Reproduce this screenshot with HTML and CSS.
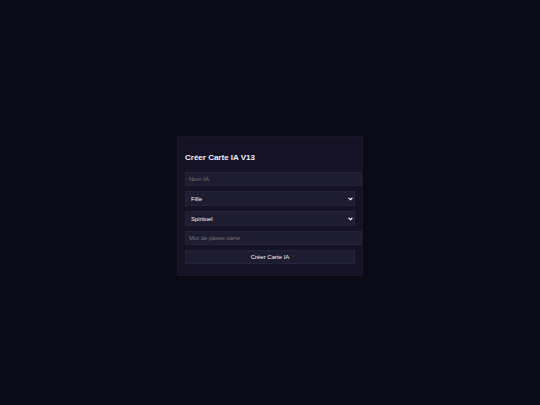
FILE: index.html
```html
<!DOCTYPE html>
<html lang="fr">
<head>
<meta charset="utf-8">
<meta name="viewport" content="width=device-width, initial-scale=1">
<title>Créer Carte IA</title>
<link rel="stylesheet" href="styles.css">
</head>
<body>
<main class="page">
  <form class="card">
    <h2 class="title">Créer Carte IA V13</h2>
    <input class="control field" type="text" placeholder="Nom IA" aria-label="Nom IA">
    <div class="picker">
      <select class="control select" aria-label="Genre">
        <option>Fille</option>
      </select>
      <svg class="chevron" viewBox="0 0 5 4" aria-hidden="true"><path d="M.6 .9 2.5 2.7 4.4 .9"/></svg>
    </div>
    <div class="picker">
      <select class="control select" aria-label="Style">
        <option>Spirituel</option>
      </select>
      <svg class="chevron" viewBox="0 0 5 4" aria-hidden="true"><path d="M.6 .9 2.5 2.7 4.4 .9"/></svg>
    </div>
    <input class="control field" type="password" placeholder="Mot de passe carte" aria-label="Mot de passe carte">
    <button class="control" type="button">Créer Carte IA</button>
  </form>
</main>
</body>
</html>
```
FILE: styles.css
```css
* {
  box-sizing: border-box;
}

body {
  margin: 0;
  background: #0a0a14;
  color: #f4f4f8;
  font-family: "Liberation Sans", Arial, sans-serif;
}

.page {
  display: grid;
  place-items: center;
  min-height: 100vh;
  padding-top: 7px;
}

.card {
  display: flex;
  flex-direction: column;
  gap: 5px;
  width: 186px;
  padding: 16px 7px 11px;
  background: #151226;
  border: 1px solid #191727;
}

.title {
  margin: 0 0 4px;
  font-size: 8px;
  line-height: 10px;
  font-weight: bold;
}

.control {
  display: block;
  width: 100%;
  height: 14px;
  margin: 0;
  padding: 0 3px;
  background: #1e1c30;
  border: 1px solid #252337;
  border-radius: 0;
  color: #f4f4f8;
  font-family: inherit;
  font-size: 6px;
  line-height: 8px;
}

/* Text fields run past the content column, up to the card's edge. */
.field {
  width: calc(100% + 7px);
}

.field::placeholder {
  color: #757575;
  opacity: 1;
}

.picker {
  position: relative;
}

.select {
  appearance: none;
  height: 15px;
  padding: 0 5px;
}

.chevron {
  position: absolute;
  top: 6px;
  right: 2px;
  width: 5px;
  height: 4px;
  fill: none;
  stroke: #fff;
  stroke-width: 1.3;
  pointer-events: none;
}
```
